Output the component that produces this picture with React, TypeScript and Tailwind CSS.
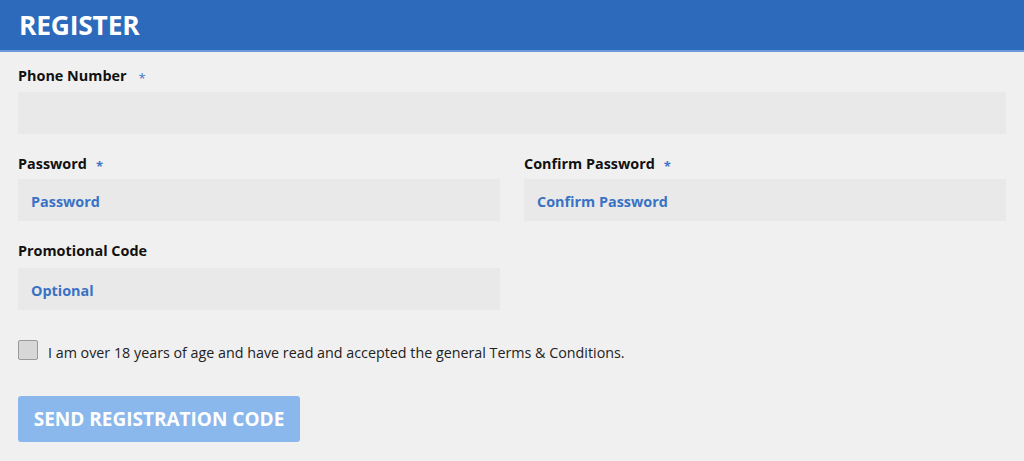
import React from "react";

const font = { fontFamily: '"Open Sans", "Noto Sans", sans-serif' };

function Label({ text, required }: { text: string; required?: boolean }) {
  return (
    <div className="flex items-center h-[20px] pt-[2px] text-[14.4px] font-bold text-[#111]">
      <span>{text}</span>
      {required && <span className="ml-[9px] text-[#3f74c6] text-[13px] leading-none mt-[4px]">*</span>}
    </div>
  );
}

function Input({ placeholder }: { placeholder?: string }) {
  return (
    <div className="h-[42px] bg-[#e9e9e9] flex items-center pl-[13px] pt-[3px] text-[14.4px] font-bold text-[#3a72c4]">
      {placeholder}
    </div>
  );
}

export default function App() {
  return (
    <div className="w-[1024px] h-[461px] bg-[#f0f0f0] overflow-hidden" style={font}>
      <div className="h-[52px] bg-[#2d6abb] border-b-[2px] border-[#6c9ad8] flex items-center pl-[19px]">
        <h1 className="text-white font-bold text-[26.4px] tracking-[-0.2px] leading-none">REGISTER</h1>
      </div>
      <div className="px-[18px] pr-[18px]">
        <div className="pt-[13px]">
          <div className="flex items-center">
            <Label text="Phone Number" />
            <span className="ml-[12px] text-[#3f74c6] text-[13px] mt-[6px] leading-none">*</span>
          </div>
          <div className="mt-[7px]">
            <Input />
          </div>
        </div>
        <div className="grid grid-cols-2 gap-x-[24px] mt-[19px]">
          <div>
            <Label text="Password" required />
            <div className="mt-[6px]"><Input placeholder="Password" /></div>
          </div>
          <div>
            <Label text="Confirm Password" required />
            <div className="mt-[6px]"><Input placeholder="Confirm Password" /></div>
          </div>
          <div className="mt-[19px]">
            <Label text="Promotional Code" />
            <div className="mt-[8px]"><Input placeholder="Optional" /></div>
          </div>
        </div>
        <div className="flex items-start mt-[30px]">
          <div className="w-[20px] h-[20px] bg-[#d7d7d7] border border-[#999] rounded-[2px]" />
          <span className="ml-[10px] pt-[3px] text-[14.3px] leading-[20px] text-[#222]">
            I am over 18 years of age and have read and accepted the general Terms &amp; Conditions.
          </span>
        </div>
        <button className="mt-[33px] w-[282px] h-[46px] bg-[#8ab8ec] rounded-[3px] text-white font-bold text-[19px] flex items-center justify-center">
          SEND REGISTRATION CODE
        </button>
      </div>
    </div>
  );
}
